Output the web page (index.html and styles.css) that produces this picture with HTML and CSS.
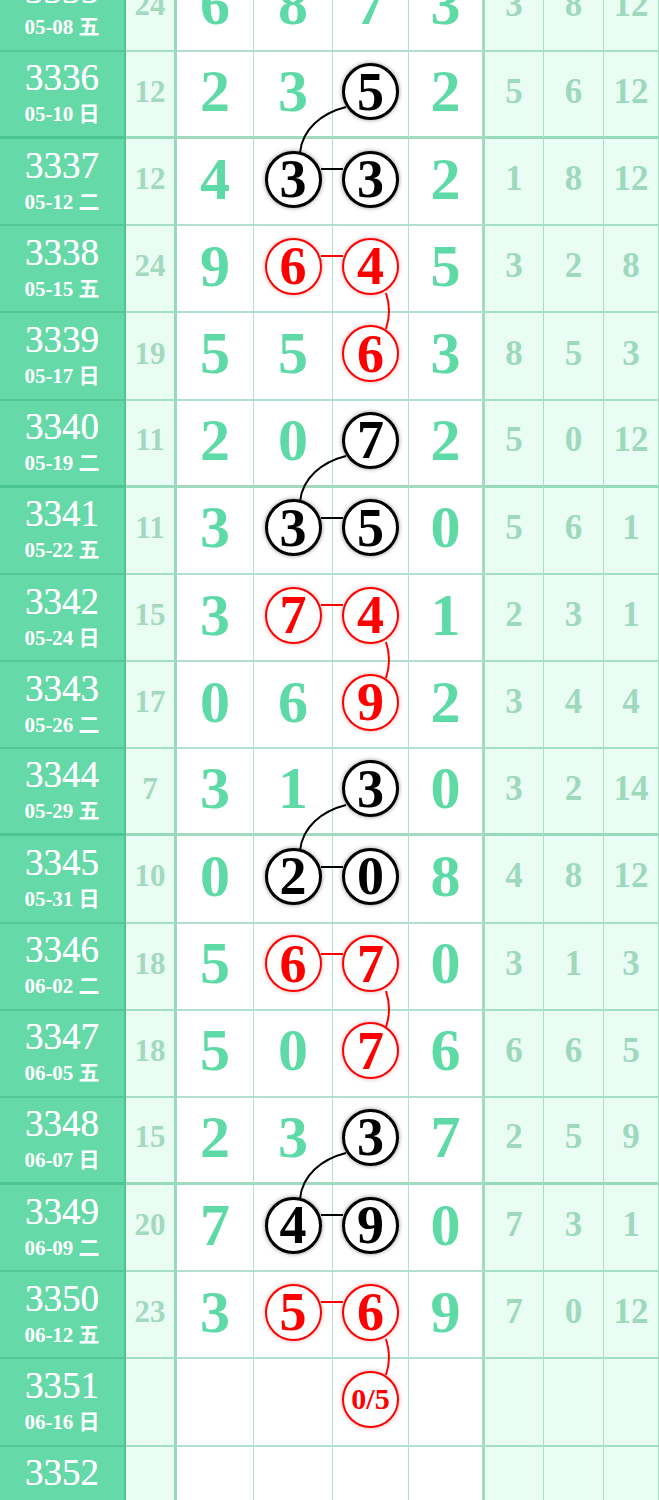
FILE: index.html
```html
<!DOCTYPE html>
<html lang="zh">
<head>
    <meta charset="UTF-8">
    <meta name="viewport" content="width=device-width, initial-scale=1.0">
    <title>走势图</title>
    <link rel="stylesheet" href="styles.css">
</head>
<body>
<div class="page">
    <div class="chart">
        <div class="row">
            <div class="lab"><span class="no">3335</span><span class="date">05-08 五</span></div>
            <div class="cnt">24</div>
            <div class="num">6</div><div class="num">8</div><div class="num">7</div><div class="num">3</div>
            <div class="side">3</div><div class="side">8</div><div class="side">12</div>
        </div>
        <div class="row grp">
            <div class="lab"><span class="no">3336</span><span class="date">05-10 日</span></div>
            <div class="cnt">12</div>
            <div class="num">2</div><div class="num">3</div><div class="num"><span class="ball blk">5</span></div><div class="num">2</div>
            <div class="side">5</div><div class="side">6</div><div class="side">12</div>
        </div>
        <div class="row">
            <div class="lab"><span class="no">3337</span><span class="date">05-12 二</span></div>
            <div class="cnt">12</div>
            <div class="num">4</div><div class="num"><span class="ball blk">3</span></div><div class="num"><span class="ball blk">3</span></div><div class="num">2</div>
            <div class="side">1</div><div class="side">8</div><div class="side">12</div>
        </div>
        <div class="row">
            <div class="lab"><span class="no">3338</span><span class="date">05-15 五</span></div>
            <div class="cnt">24</div>
            <div class="num">9</div><div class="num"><span class="ball red">6</span></div><div class="num"><span class="ball red">4</span></div><div class="num">5</div>
            <div class="side">3</div><div class="side">2</div><div class="side">8</div>
        </div>
        <div class="row">
            <div class="lab"><span class="no">3339</span><span class="date">05-17 日</span></div>
            <div class="cnt">19</div>
            <div class="num">5</div><div class="num">5</div><div class="num"><span class="ball red">6</span></div><div class="num">3</div>
            <div class="side">8</div><div class="side">5</div><div class="side">3</div>
        </div>
        <div class="row grp">
            <div class="lab"><span class="no">3340</span><span class="date">05-19 二</span></div>
            <div class="cnt">11</div>
            <div class="num">2</div><div class="num">0</div><div class="num"><span class="ball blk">7</span></div><div class="num">2</div>
            <div class="side">5</div><div class="side">0</div><div class="side">12</div>
        </div>
        <div class="row">
            <div class="lab"><span class="no">3341</span><span class="date">05-22 五</span></div>
            <div class="cnt">11</div>
            <div class="num">3</div><div class="num"><span class="ball blk">3</span></div><div class="num"><span class="ball blk">5</span></div><div class="num">0</div>
            <div class="side">5</div><div class="side">6</div><div class="side">1</div>
        </div>
        <div class="row">
            <div class="lab"><span class="no">3342</span><span class="date">05-24 日</span></div>
            <div class="cnt">15</div>
            <div class="num">3</div><div class="num"><span class="ball red">7</span></div><div class="num"><span class="ball red">4</span></div><div class="num">1</div>
            <div class="side">2</div><div class="side">3</div><div class="side">1</div>
        </div>
        <div class="row">
            <div class="lab"><span class="no">3343</span><span class="date">05-26 二</span></div>
            <div class="cnt">17</div>
            <div class="num">0</div><div class="num">6</div><div class="num"><span class="ball red">9</span></div><div class="num">2</div>
            <div class="side">3</div><div class="side">4</div><div class="side">4</div>
        </div>
        <div class="row grp">
            <div class="lab"><span class="no">3344</span><span class="date">05-29 五</span></div>
            <div class="cnt">7</div>
            <div class="num">3</div><div class="num">1</div><div class="num"><span class="ball blk">3</span></div><div class="num">0</div>
            <div class="side">3</div><div class="side">2</div><div class="side">14</div>
        </div>
        <div class="row">
            <div class="lab"><span class="no">3345</span><span class="date">05-31 日</span></div>
            <div class="cnt">10</div>
            <div class="num">0</div><div class="num"><span class="ball blk">2</span></div><div class="num"><span class="ball blk">0</span></div><div class="num">8</div>
            <div class="side">4</div><div class="side">8</div><div class="side">12</div>
        </div>
        <div class="row">
            <div class="lab"><span class="no">3346</span><span class="date">06-02 二</span></div>
            <div class="cnt">18</div>
            <div class="num">5</div><div class="num"><span class="ball red">6</span></div><div class="num"><span class="ball red">7</span></div><div class="num">0</div>
            <div class="side">3</div><div class="side">1</div><div class="side">3</div>
        </div>
        <div class="row">
            <div class="lab"><span class="no">3347</span><span class="date">06-05 五</span></div>
            <div class="cnt">18</div>
            <div class="num">5</div><div class="num">0</div><div class="num"><span class="ball red">7</span></div><div class="num">6</div>
            <div class="side">6</div><div class="side">6</div><div class="side">5</div>
        </div>
        <div class="row grp">
            <div class="lab"><span class="no">3348</span><span class="date">06-07 日</span></div>
            <div class="cnt">15</div>
            <div class="num">2</div><div class="num">3</div><div class="num"><span class="ball blk">3</span></div><div class="num">7</div>
            <div class="side">2</div><div class="side">5</div><div class="side">9</div>
        </div>
        <div class="row">
            <div class="lab"><span class="no">3349</span><span class="date">06-09 二</span></div>
            <div class="cnt">20</div>
            <div class="num">7</div><div class="num"><span class="ball blk">4</span></div><div class="num"><span class="ball blk">9</span></div><div class="num">0</div>
            <div class="side">7</div><div class="side">3</div><div class="side">1</div>
        </div>
        <div class="row">
            <div class="lab"><span class="no">3350</span><span class="date">06-12 五</span></div>
            <div class="cnt">23</div>
            <div class="num">3</div><div class="num"><span class="ball red">5</span></div><div class="num"><span class="ball red">6</span></div><div class="num">9</div>
            <div class="side">7</div><div class="side">0</div><div class="side">12</div>
        </div>
        <div class="row">
            <div class="lab"><span class="no">3351</span><span class="date">06-16 日</span></div>
            <div class="cnt"></div>
            <div class="num"></div><div class="num"></div><div class="num"><span class="ball red small">0/5</span></div><div class="num"></div>
            <div class="side"></div><div class="side"></div><div class="side"></div>
        </div>
        <div class="row">
            <div class="lab"><span class="no">3352</span><span class="date">06-19 二</span></div>
            <div class="cnt"></div>
            <div class="num"></div><div class="num"></div><div class="num"></div><div class="num"></div>
            <div class="side"></div><div class="side"></div><div class="side"></div>
        </div>
    </div>

    <!-- connectors between the drawn balls -->
    <svg class="links" width="659" height="1500" viewBox="0 0 659 1500">
        <g fill="none" stroke="#000" stroke-width="2">
            <path d="M346 107 C322 113 302 129 300 153"/>
            <path d="M321 169 H343"/>
            <path d="M346 456 C322 462 302 478 300 502"/>
            <path d="M321 518 H343"/>
            <path d="M346 805 C322 811 302 827 300 851"/>
            <path d="M321 867 H343"/>
            <path d="M346 1153 C322 1159 302 1175 300 1199"/>
            <path d="M321 1215 H343"/>
        </g>
        <g fill="none" stroke="#f00" stroke-width="2">
            <path d="M321 256 H343"/>
            <path d="M386 293 Q392 311 386 329"/>
            <path d="M321 605 H343"/>
            <path d="M386 642 Q392 660 386 678"/>
            <path d="M321 954 H343"/>
            <path d="M386 991 Q392 1009 386 1027"/>
            <path d="M321 1302 H343"/>
            <path d="M386 1339 Q392 1357 386 1375"/>
        </g>
    </svg>
</div>
</body>
</html>
```

FILE: styles.css
```css
body {
    margin: 0;
    background-color: #ffffff;
    font-family: "Liberation Serif", "Noto Sans CJK SC", serif;
}
.page {
    position: relative;
    height: 1500px;
    overflow: hidden;
}
.chart {
    margin-top: -35.17px;
}
.row {
    display: grid;
    grid-template-columns: 126px 51px 77px 79px 76px 76px 59px 60px 1fr;
    height: 87.17px;
}
.row > div {
    box-sizing: border-box;
    display: flex;
    align-items: center;
    justify-content: center;
    padding-bottom: 5px;
    border-right: 1.5px solid rgba(50, 175, 120, 0.38);
    border-bottom: 2px solid rgba(50, 175, 120, 0.38);
}
.row.grp > div {
    border-bottom: 3px solid rgba(50, 175, 120, 0.45);
}
.lab {
    flex-direction: column;
    background-color: #65d9a8;
    color: #ffffff;
}
.row > .lab {
    padding-bottom: 0;
    border-right: 2px solid rgba(40, 160, 110, 0.35);
}
.no {
    font-size: 37px;
    line-height: 32px;
    text-shadow: 0 0 0.5px #ffffff;
}
.date {
    font-size: 21px;
    font-weight: bold;
    line-height: 24px;
    margin-top: 8px;
}
.cnt {
    background-color: #e9fdf4;
    color: #a3d9bf;
    font-size: 31px;
    font-weight: bold;
}
.row > .cnt {
    border-right: 3px solid rgba(50, 175, 120, 0.45);
}
.num {
    color: #5edaa6;
    font-size: 60px;
    font-weight: bold;
}
.row > .num:nth-child(6) {
    border-right: 3px solid rgba(50, 175, 120, 0.45);
}
.side {
    background-color: #e9fdf4;
    color: #9ed8bd;
    font-size: 35px;
    font-weight: bold;
}
.ball {
    position: relative;
    z-index: 2;
    box-sizing: border-box;
    display: flex;
    align-items: center;
    justify-content: center;
    width: 57px;
    height: 57px;
    border-radius: 50%;
    background-color: #ffffff;
    font-size: 54px;
    line-height: 1;
}
.blk {
    color: #000000;
    border: 3px solid #000000;
    box-shadow: 0 0 4px rgba(0, 0, 0, 0.45);
}
.red {
    color: #ff0000;
    border: 2.5px solid #ff0000;
    box-shadow: 0 0 4px rgba(150, 0, 0, 0.35);
}
.small {
    font-size: 30px;
}
.links {
    position: absolute;
    top: 0;
    left: 0;
    z-index: 1;
}
```
